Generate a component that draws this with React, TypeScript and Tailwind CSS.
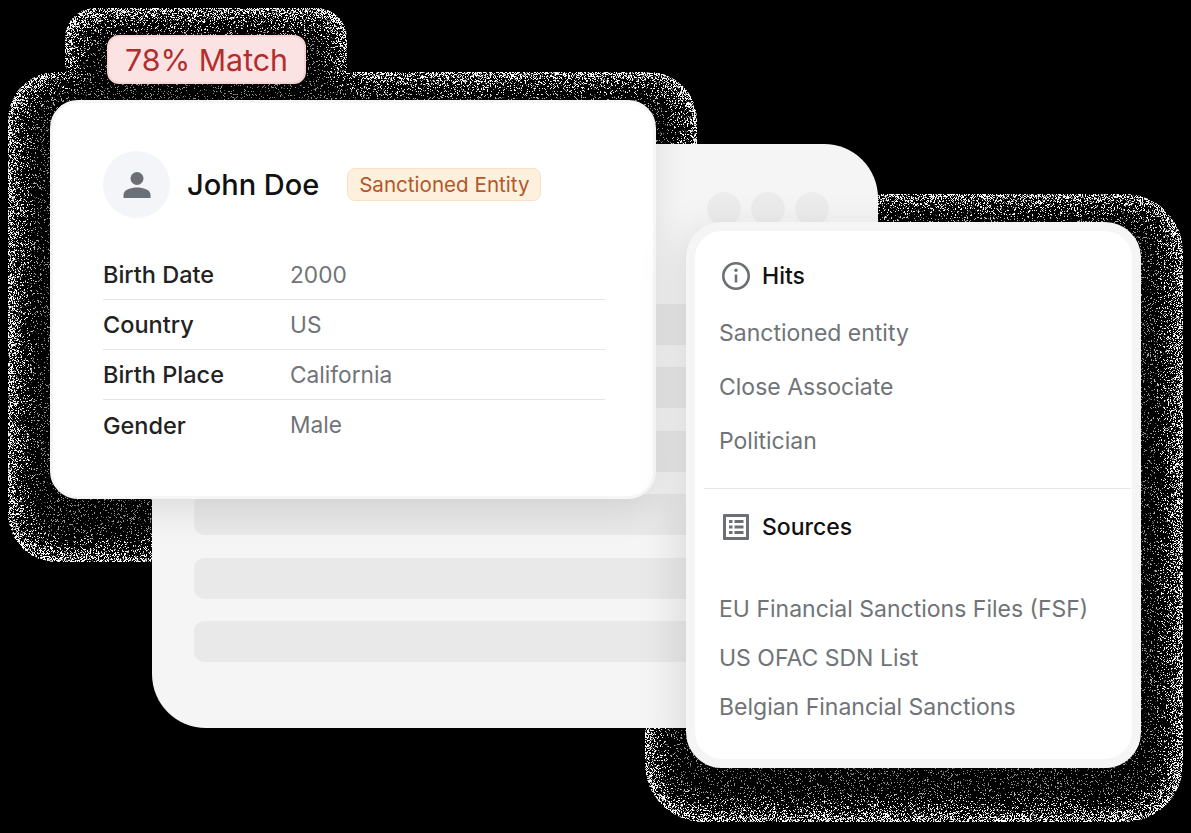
const facts = [
  ["Birth Date", "2000"],
  ["Country", "US"],
  ["Birth Place", "California"],
  ["Gender", "Male"],
];

const hits = ["Sanctioned entity", "Close Associate", "Politician"];
const sources = [
  "EU Financial Sanctions Files (FSF)",
  "US OFAC SDN List",
  "Belgian Financial Sanctions",
];

// dithered halo left behind the cards by the flattened png shadow
function Halo() {
  return (
    <svg className="absolute inset-0 h-[833px] w-[1191px]" viewBox="0 0 1191 833">
      <defs>
        <filter
          id="grain"
          x="0"
          y="0"
          width="1191"
          height="833"
          filterUnits="userSpaceOnUse"
          colorInterpolationFilters="sRGB"
        >
          <feGaussianBlur in="SourceAlpha" stdDeviation="15" result="blur" />
          <feComposite in="SourceAlpha" in2="blur" operator="out" result="glow" />
          <feTurbulence type="fractalNoise" baseFrequency="1.7" numOctaves="2" seed="4" result="noise" />
          <feColorMatrix
            in="noise"
            type="matrix"
            values="0 0 0 0 0 0 0 0 0 0 0 0 0 0 0 3 0 0 0 -1"
            result="noiseAlpha"
          />
          <feComposite in="glow" in2="noiseAlpha" operator="arithmetic" k1="0" k2="1" k3="1" k4="-0.88" result="sum" />
          <feComponentTransfer in="sum" result="dots">
            <feFuncA type="linear" slope="5" intercept="0" />
          </feComponentTransfer>
          <feFlood floodColor="#ffffff" result="white" />
          <feComposite in="white" in2="dots" operator="in" result="lit" />
          <feComposite in="lit" in2="SourceAlpha" operator="in" />
        </filter>
      </defs>
      <g filter="url(#grain)">
        <rect x="8" y="72" width="689" height="490" rx="48" fill="#fff" />
        <rect x="65" y="8" width="282" height="110" rx="30" fill="#fff" />
        <rect x="645" y="194" width="538" height="628" rx="58" fill="#fff" />
      </g>
    </svg>
  );
}

function BackPanel() {
  return (
    <div className="absolute left-[152px] top-[144px] flex h-[584px] w-[726px] flex-col rounded-[54px] bg-[#f5f5f5] pl-[42px] pr-[42px] pt-[48px]">
      <div className="flex justify-end gap-[10px] pr-[7px]">
        <span className="h-[34px] w-[34px] rounded-full bg-[#ececec]" />
        <span className="h-[34px] w-[34px] rounded-full bg-[#ececec]" />
        <span className="h-[34px] w-[34px] rounded-full bg-[#ececec]" />
      </div>
      <div className="mt-[78px] flex flex-col gap-[22.4px]">
        {[0, 1, 2, 3, 4, 5].map((i) => (
          <div key={i} className="h-[41px] rounded-[10px] bg-[#e9e9e9]" />
        ))}
      </div>
    </div>
  );
}

function ProfileCard() {
  return (
    <div className="absolute left-[50px] top-[100px] h-[399px] w-[606px] rounded-[28px] border-[3px] border-[#f6f6f6] bg-white pl-[50px] pr-[48px] pt-[48px] shadow-[0_12px_36px_rgba(0,0,0,0.1)]">
      <div className="flex items-center">
        <div className="flex h-[67px] w-[67px] items-center justify-center rounded-full bg-[#f3f5f8]">
          <svg className="h-[30px] w-[30px]" viewBox="0 0 30 30" fill="#6b7076">
            <circle cx="15" cy="8.500" r="6.500" />
            <path d="M1.500 28v-3.200C1.500 20 9 17.600 15 17.600s13.500 2.400 13.500 7.200V28z" />
          </svg>
        </div>
        <span className="ml-[17px] text-[29px] font-medium leading-none text-[#111111]">John Doe</span>
        <span className="ml-[28px] flex h-[33px] w-[194px] items-center justify-center rounded-[8px] border border-[#f8e2bf] bg-[#fdf1de] pt-[2px] text-[20.6px] text-[#b4572a]">
          Sanctioned Entity
        </span>
      </div>
      <dl className="mt-[32px]">
        {facts.map(([label, value], i) => (
          <div
            key={label}
            className={
              i < facts.length - 1
                ? "flex h-[50px] items-center border-b border-[#e2e4e8] pt-[1px]"
                : "flex h-[50px] items-center pt-[1px]"
            }
          >
            <dt className="w-[187px] text-[23.5px] font-[450] text-[#222222]">{label}</dt>
            <dd className="text-[22.7px] text-[#707478]">{value}</dd>
          </div>
        ))}
      </dl>
    </div>
  );
}

function HitsCard() {
  return (
    <div className="absolute left-[686px] top-[222px] flex h-[546px] w-[455px] flex-col rounded-[36px] border-[9px] border-[#f5f5f5] bg-white shadow-[-10px_8px_40px_rgba(0,0,0,0.1)]">
      <div className="mt-[23px] flex h-[44px] items-center pl-[26px]">
        <svg className="h-[30px] w-[30px]" viewBox="0 0 30 30" fill="none" stroke="#6b7076" strokeWidth="2.600">
          <circle cx="15" cy="15" r="12.700" />
          <path d="M15 13.500v8" />
          <circle cx="15" cy="9.300" r="1.700" fill="#6b7076" stroke="none" />
        </svg>
        <span className="ml-[11px] text-[23px] font-[450] text-[#111111]">Hits</span>
      </div>
      <ul className="mt-[18px] flex flex-col gap-[20px] pl-[24px]">
        {hits.map((h) => (
          <li key={h} className="h-[34px] text-[23px] leading-[34px] text-[#707478]">{h}</li>
        ))}
      </ul>
      <div className="ml-[9px] mr-[1px] mt-[30px] border-t border-[#e5e7eb]" />
      <div className="mt-[16px] flex h-[44px] items-center pl-[27px]">
        <svg className="h-[28px] w-[28px]" viewBox="0 0 28 28" fill="#6b7076">
          <path
            fillRule="evenodd"
            d="M2 1h24a1 1 0 0 1 1 1v24a1 1 0 0 1-1 1H2a1 1 0 0 1-1-1V2a1 1 0 0 1 1-1zm2 3v20h20V4z"
          />
          <rect x="7" y="7" width="3.500" height="3" />
          <rect x="12.500" y="7" width="9" height="3" />
          <rect x="7" y="12.500" width="3.500" height="3" />
          <rect x="12.500" y="12.500" width="9" height="3" />
          <rect x="7" y="18" width="3.500" height="3" />
          <rect x="12.500" y="18" width="9" height="3" />
        </svg>
        <span className="ml-[12px] text-[23px] font-[450] text-[#111111]">Sources</span>
      </div>
      <ul className="mt-[43px] flex flex-col gap-[15px] pl-[24px]">
        {sources.map((s) => (
          <li key={s} className="h-[34px] text-[23px] leading-[34px] text-[#707478]">{s}</li>
        ))}
      </ul>
    </div>
  );
}

export default function App() {
  return (
    <div className="relative h-[833px] w-[1191px] overflow-hidden bg-black font-['Inter',sans-serif]">
      <Halo />
      <BackPanel />
      <ProfileCard />
      <HitsCard />
      <div className="absolute left-[107px] top-[35px] flex h-[49px] w-[199px] items-center justify-center rounded-[12px] border-2 border-[#f8d0d0] bg-[#fbe3e3] pt-[2px] text-[30.3px] text-[#b32d2d]">
        78% Match
      </div>
    </div>
  );
}
